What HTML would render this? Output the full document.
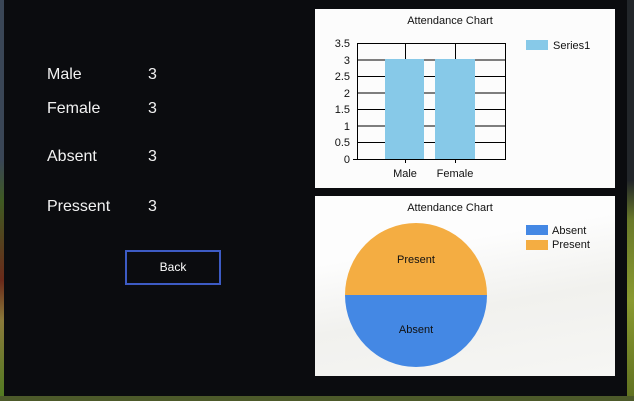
<!DOCTYPE html>
<html><head><style>
body{margin:0;width:634px;height:401px;overflow:hidden;background:#0b0c0f;font-family:"Liberation Sans",sans-serif;position:relative}
.l{position:absolute;color:#f2f2f2;font-size:16px;line-height:18px}
.p{position:absolute;background:#fcfcfc}
</style></head><body>
<div style="position:absolute;left:0;top:0;width:4px;height:401px;background:linear-gradient(#3a4656 0 40%,#3f5a22 50%,#6a2a1a 70%,#8a7a3a 80%,#4f7a20 100%)"></div>
<div style="position:absolute;left:627px;top:0;width:7px;height:401px;background:linear-gradient(#22262a 0 45%,#6a7a2a 55%,#8a9a30 75%,#5f7020 100%)"></div>
<div style="position:absolute;left:0;top:396px;width:634px;height:5px;background:#4d5a2a"></div>
<div class="l" style="left:47px;top:66px">Male</div><div class="l" style="left:148px;top:66px">3</div>
<div class="l" style="left:47px;top:100px">Female</div><div class="l" style="left:148px;top:100px">3</div>
<div class="l" style="left:47px;top:148px">Absent</div><div class="l" style="left:148px;top:148px">3</div>
<div class="l" style="left:47px;top:198px">Pressent</div><div class="l" style="left:148px;top:198px">3</div>
<div style="position:absolute;left:125px;top:250px;width:92px;height:31px;border:2px solid #3d5bc4;color:#fff;font-size:12px;text-align:center;line-height:31px">Back</div>
<div class="p" style="left:315px;top:9px;width:300px;height:179px">
<svg width="300" height="179" style="font-family:'Liberation Sans',sans-serif">
<text x="135" y="15" font-size="11" text-anchor="middle" fill="#111">Attendance Chart</text>
<g stroke="#000" stroke-width="1">
<line x1="42" y1="34.5" x2="190" y2="34.5"/><line x1="42" y1="51" x2="190" y2="51"/><line x1="42" y1="67.5" x2="190" y2="67.5"/><line x1="42" y1="84" x2="190" y2="84"/><line x1="42" y1="100.5" x2="190" y2="100.5"/><line x1="42" y1="117" x2="190" y2="117"/><line x1="42" y1="133.5" x2="190" y2="133.5"/><line x1="38" y1="150.5" x2="190" y2="150.5"/>
<line x1="42.5" y1="34" x2="42.5" y2="151"/><line x1="190.5" y1="34" x2="190.5" y2="151"/><line x1="90.5" y1="34" x2="90.5" y2="154"/><line x1="140.5" y1="34" x2="140.5" y2="154"/>
</g>
<rect x="70" y="50" width="39" height="100" fill="#87c9e8"/><rect x="120" y="50" width="40" height="100" fill="#87c9e8"/>
<g font-size="11" fill="#111" text-anchor="end"><text x="35" y="38">3.5</text><text x="35" y="55">3</text><text x="35" y="71">2.5</text><text x="35" y="88">2</text><text x="35" y="104">1.5</text><text x="35" y="121">1</text><text x="35" y="137">0.5</text><text x="35" y="154">0</text></g>
<text x="90" y="168" font-size="11" text-anchor="middle" fill="#111">Male</text><text x="140" y="168" font-size="11" text-anchor="middle" fill="#111">Female</text>
<rect x="211" y="31" width="22" height="10" fill="#87c9e8"/><text x="238" y="40" font-size="11" fill="#111">Series1</text>
</svg></div>
<div class="p" style="left:315px;top:196px;width:300px;height:180px;background:linear-gradient(170deg,#fdfdfd 30%,#f1f1ee 60%,#f6f6f4)">
<svg width="300" height="180" style="font-family:'Liberation Sans',sans-serif">
<text x="135" y="15" font-size="11" text-anchor="middle" fill="#111">Attendance Chart</text>
<path d="M30 99 A71 72 0 0 1 172 99 Z" fill="#f4ad42"/>
<path d="M30 99 A71 72 0 0 0 172 99 Z" fill="#4488e4"/>
<text x="101" y="67" font-size="11" text-anchor="middle" fill="#111">Present</text>
<text x="101" y="137" font-size="11" text-anchor="middle" fill="#111">Absent</text>
<rect x="211" y="29" width="22" height="10" fill="#4488e4"/><text x="237" y="38" font-size="11" fill="#111">Absent</text>
<rect x="211" y="44" width="22" height="10" fill="#f4ad42"/><text x="237" y="52" font-size="11" fill="#111">Present</text>
</svg></div>
</body></html>
